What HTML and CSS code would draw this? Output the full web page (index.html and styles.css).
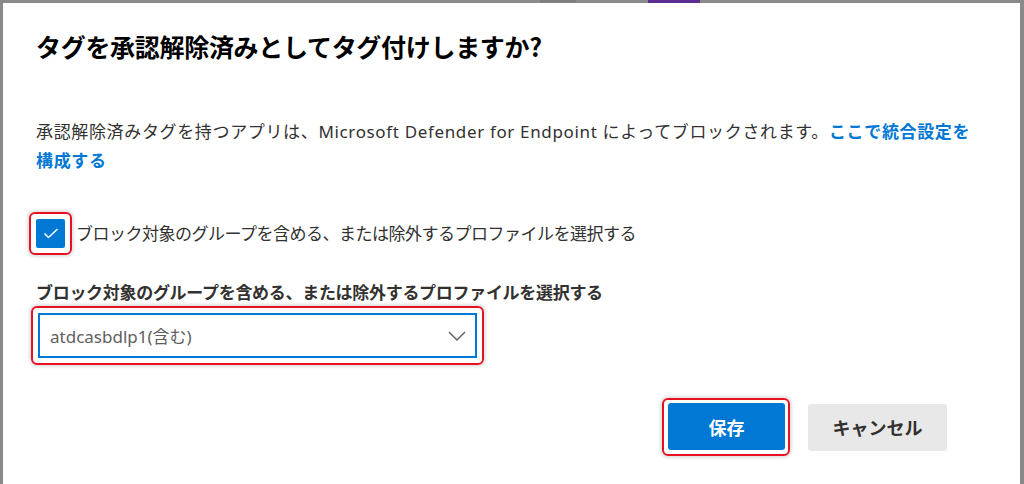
FILE: index.html
```html
<!DOCTYPE html>
<html lang="ja">
<head>
    <meta charset="utf-8">
    <title>タグを承認解除済みとしてタグ付け</title>
    <link rel="stylesheet" href="styles.css">
</head>
<body>
    <div class="backdrop-top">
        <span class="seg seg-gray"></span>
        <span class="seg seg-dark"></span>
        <span class="seg seg-gray2"></span>
        <span class="seg seg-purple"></span>
        <span class="seg seg-rest"></span>
    </div>

    <div class="dialog">
        <h1 class="dialog-title">タグを承認解除済みとしてタグ付けしますか?</h1>

        <p class="dialog-text">承認解除済みタグを持つアプリは、Microsoft Defender for Endpoint によってブロックされます。<a href="#" class="link">ここで統合設定を<span class="nowrap">構成する</span></a></p>

        <div class="check-row">
            <span class="mark mark-check">
                <span class="checkbox">
                    <svg width="16" height="11" viewBox="0 0 16 11">
                        <polyline points="1.5,5.5 5.5,9.5 14.5,1" fill="none" stroke="#fff" stroke-width="1.6"/>
                    </svg>
                </span>
            </span>
            <span class="check-label">ブロック対象のグループを含める、または除外するプロファイルを選択する</span>
        </div>

        <div class="field-label">ブロック対象のグループを含める、または除外するプロファイルを選択する</div>
        <div class="mark mark-select">
            <div class="select">
                <span class="select-value">atdcasbdlp1(含む)</span>
                <svg width="18" height="10" viewBox="0 0 18 10">
                    <polyline points="1,1 9,9 17,1" fill="none" stroke="#605e5c" stroke-width="1.4"/>
                </svg>
            </div>
        </div>

        <div class="actions">
            <span class="mark mark-button">
                <button type="button" class="btn btn-primary">保存</button>
            </span>
            <button type="button" class="btn btn-default">キャンセル</button>
        </div>
    </div>
</body>
</html>
```

FILE: styles.css
```css
body {
    margin: 0;
    padding: 0;
    background-color: #8a8a8a;
    font-family: "Noto Sans", "Noto Sans CJK JP", sans-serif;
    color: #323130;
    overflow: hidden;
}

.backdrop-top {
    display: flex;
    height: 3px;
}

.seg { display: block; height: 100%; }
.seg-gray { width: 540px; background: #8a8a8a; }
.seg-dark { width: 36px; background: #7f7f7f; }
.seg-gray2 { width: 72px; background: #8a8a8a; }
.seg-purple { width: 52px; background: #5c2d91; }
.seg-rest { flex: 1; background: #8a8a8a; }

.dialog {
    background-color: #fff;
    margin: 0 4px 0 3px;
    height: 481px;
    padding: 27px 38px 0 33px;
    box-sizing: border-box;
}

.dialog-title {
    margin: 0;
    font-family: "Noto Sans CJK JP", sans-serif;
    font-size: 25px;
    font-weight: 600;
    line-height: 32px;
    color: #000;
    letter-spacing: -0.3px;
}

.dialog-text {
    margin: 55px 0 0 0;
    font-size: 17px;
    line-height: 29px;
    letter-spacing: 0.65px;
}

.link {
    color: #0078d4;
    text-decoration: none;
    font-weight: 600;
}

.nowrap {
    white-space: nowrap;
}

/* red highlight boxes drawn round the controls */
.mark {
    display: inline-block;
    border: 2px solid #e81123;
    border-radius: 6px;
    padding: 5px;
    box-shadow: 0 0 3px 2px rgba(0, 0, 0, 0.12);
}

.check-row {
    display: flex;
    align-items: center;
    margin-top: 37px;
    margin-left: -7px;
}

.checkbox {
    display: flex;
    align-items: center;
    justify-content: center;
    width: 29px;
    height: 29px;
    background-color: #0078d4;
    border-radius: 2px;
}

.check-label {
    margin-left: 4px;
    font-size: 17px;
    line-height: 24px;
    letter-spacing: -0.5px;
}

.field-label {
    margin: 26px 0 0 0;
    font-size: 17px;
    font-weight: 700;
    line-height: 24px;
    letter-spacing: -0.3px;
}

.mark-select {
    display: block;
    width: 439px;
    margin: 1px 0 0 -5px;
}

.select {
    display: flex;
    align-items: center;
    justify-content: space-between;
    height: 45px;
    border: 2px solid #0078d4;
    padding: 0 9px 0 10px;
    box-sizing: border-box;
}

.select-value {
    font-size: 17px;
    color: #605e5c;
}

.actions {
    display: flex;
    justify-content: flex-end;
    align-items: center;
    gap: 18px;
    margin: 33px 35px 0 0;
}

.mark-button {
    padding: 3px 3px 4px 4px;
}

.btn {
    display: block;
    height: 47px;
    border: none;
    border-radius: 3px;
    font-family: "Noto Sans CJK JP", sans-serif;
    font-size: 18px;
    font-weight: 700;
    cursor: pointer;
}

.btn-primary {
    width: 117px;
    background-color: #0078d4;
    color: #fff;
}

.btn-default {
    width: 139px;
    background-color: #e8e8e8;
    color: #323130;
}
```
